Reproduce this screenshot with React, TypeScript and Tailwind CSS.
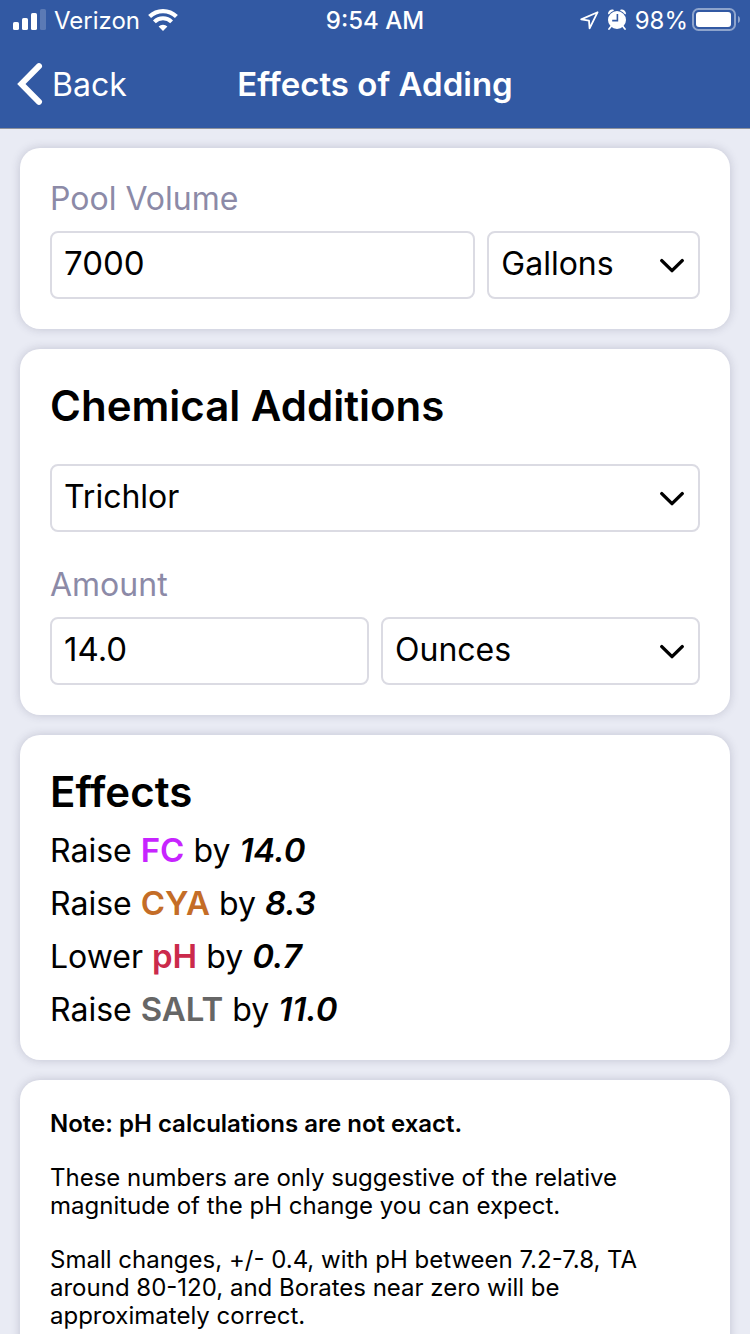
import { useState } from 'react'
import type { ReactNode, SelectHTMLAttributes } from 'react'

const chemicals = ['Trichlor', 'Dichlor', 'Bleach', 'Borax']

const effects = [
  { verb: 'Raise', name: 'FC', color: 'text-[#c724ff]', value: '14.0' },
  { verb: 'Raise', name: 'CYA', color: 'text-[#c46d27]', value: '8.3' },
  { verb: 'Lower', name: 'pH', color: 'text-[#cb2a4b]', value: '0.7' },
  { verb: 'Raise', name: 'SALT', color: 'text-[#666666]', value: '11.0' },
]

function Card({ children }: { children: ReactNode }) {
  return (
    <section className="rounded-[20px] bg-white p-[30px] shadow-[0_0_10px_rgba(60,60,90,0.22)]">
      {children}
    </section>
  )
}

function Select({ children, ...props }: SelectHTMLAttributes<HTMLSelectElement>) {
  return (
    <div className="relative">
      <select
        {...props}
        className="block h-[68px] w-full appearance-none rounded-lg border-2 border-[#dbdbe3] bg-white pr-14 pb-0.5 pl-3 text-[32px] text-black"
      >
        {children}
      </select>
      {/* Chevron over the right end of the select */}
      <svg
        className="pointer-events-none absolute top-[27px] right-4 h-4 w-6"
        viewBox="0 0 24 16"
        fill="none"
        stroke="black"
        strokeWidth="3.4"
        strokeLinecap="round"
        strokeLinejoin="round"
        aria-hidden="true"
      >
        <path d="M1.8 2.6 12 12.6 22.2 2.6" />
      </svg>
    </div>
  )
}

function StatusBar() {
  return (
    <div className="grid h-10 grid-cols-3 items-center px-3 text-[24px] leading-7">
      <div className="flex items-center gap-2">
        <svg className="h-[22px] w-[34px]" viewBox="0 0 34 22" fill="white" aria-hidden="true">
          <rect x="1" y="13" width="6" height="8" rx="1.6" />
          <rect x="10" y="9" width="6" height="12" rx="1.6" />
          <rect x="19" y="4" width="6" height="17" rx="1.6" />
          <rect x="28" y="0" width="6" height="21" rx="1.6" opacity="0.2" />
        </svg>
        <span className="pt-0.5">Verizon</span>
        <svg className="h-[22px] w-[30px]" viewBox="0 0 30 22" fill="none" stroke="white" aria-hidden="true">
          <path d="M1.6 7.6a19.2 19.2 0 0 1 26.8 0" strokeWidth="4.2" />
          <path d="M6.4 12.9a12.2 12.2 0 0 1 17.2 0" strokeWidth="4" />
          <path d="M10.6 17.6a6.4 6.4 0 0 1 8.8 0L15 22Z" fill="white" stroke="none" />
        </svg>
      </div>
      <div className="pt-0.5 text-center font-medium">9:54 AM</div>
      <div className="flex items-center justify-end">
        <svg className="mr-2 h-5 w-5" viewBox="0 0 20 20" fill="none" stroke="white" strokeWidth="1.8" strokeLinejoin="round" aria-hidden="true">
          <path d="M18.6 2.2 2.2 9.4l7.8 1.2.6 7.8Z" />
        </svg>
        <svg className="mr-2 h-[22px] w-5" viewBox="0 0 20 22" aria-hidden="true">
          <circle cx="10" cy="11" r="9" fill="white" />
          <path d="M1 4.8A4.2 4.2 0 0 1 6.2.6L7 1.4A10.5 10.5 0 0 0 1.8 5.6ZM19 4.8A4.2 4.2 0 0 0 13.8.6L13 1.4a10.5 10.5 0 0 1 5.2 4.2Z" fill="white" />
          <path d="M3.8 17.8 2 20M16.2 17.8 18 20" stroke="white" strokeWidth="1.8" strokeLinecap="round" />
          <path d="M10.4 5v6.6H5.2" fill="none" stroke="#3259a3" strokeWidth="1.6" />
        </svg>
        <span className="mr-1 pt-0.5">98%</span>
        <svg className="-mr-0.5 h-6 w-12" viewBox="0 0 48 24" fill="none" aria-hidden="true">
          <rect x="1" y="1" width="42" height="21" rx="5.5" stroke="white" strokeOpacity="0.45" strokeWidth="2" />
          <rect x="4" y="4" width="35" height="15" rx="3" fill="white" />
          <path d="M46 8c1.4.6 2 1.8 2 3.5s-.6 2.9-2 3.5Z" fill="white" fillOpacity="0.45" />
        </svg>
      </div>
    </div>
  )
}

export default function App() {
  const [volume, setVolume] = useState('7000')
  const [volumeUnit, setVolumeUnit] = useState('Gallons')
  const [chemical, setChemical] = useState('Trichlor')
  const [amount, setAmount] = useState('14.0')
  const [amountUnit, setAmountUnit] = useState('Ounces')

  const inputClass =
    'block h-[68px] w-full rounded-lg border-2 border-[#dbdbe3] bg-white px-3 pb-1 text-[33px] text-black'

  return (
    <div className="min-h-screen bg-[#e9ebf4] font-['Inter','Liberation_Sans',sans-serif] text-black">
      <header className="border-b border-[#8e929c] bg-[#3259a3] text-white">
        <StatusBar />
        <div className="grid h-[88px] grid-cols-[1fr_auto_1fr] items-center px-4">
          <button type="button" className="flex items-center gap-2 justify-self-start text-[32px]">
            <svg className="h-[42px] w-7" viewBox="0 0 28 42" fill="none" stroke="white" strokeWidth="6" strokeLinecap="round" aria-hidden="true">
              <path d="M23 3.2 5.4 21 23 38.8" />
            </svg>
            <span className="pt-0.5">Back</span>
          </button>
          <h1 className="pt-0.5 text-[33px] font-semibold">Effects of Adding</h1>
        </div>
      </header>

      <main className="flex flex-col gap-5 px-5 py-[19px]">
        <Card>
          <label htmlFor="volume" className="mb-3 block text-[32px] leading-[41px] text-[#8c8aa7]">
            Pool Volume
          </label>
          <div className="grid grid-cols-[2fr_1fr] gap-3">
            <input
              id="volume"
              type="text"
              inputMode="decimal"
              className={inputClass}
              value={volume}
              onChange={(e) => setVolume(e.target.value)}
            />
            <Select aria-label="Volume unit" value={volumeUnit} onChange={(e) => setVolumeUnit(e.target.value)}>
              <option>Gallons</option>
              <option>Liters</option>
            </Select>
          </div>
        </Card>

        <Card>
          <h2 className="mb-8 text-[42px] leading-[53px] font-semibold">Chemical Additions</h2>
          <Select aria-label="Chemical" value={chemical} onChange={(e) => setChemical(e.target.value)}>
            {chemicals.map((name) => (
              <option key={name}>{name}</option>
            ))}
          </Select>
          <label htmlFor="amount" className="mt-8 mb-3 block text-[32px] leading-[41px] text-[#8c8aa7]">
            Amount
          </label>
          <div className="grid grid-cols-2 gap-3">
            <input
              id="amount"
              type="text"
              inputMode="decimal"
              className={inputClass}
              value={amount}
              onChange={(e) => setAmount(e.target.value)}
            />
            <Select aria-label="Amount unit" value={amountUnit} onChange={(e) => setAmountUnit(e.target.value)}>
              <option>Ounces</option>
              <option>Pounds</option>
              <option>Grams</option>
            </Select>
          </div>
        </Card>

        <Card>
          <h2 className="text-[42px] leading-[53px] font-semibold">Effects</h2>
          <ul>
            {effects.map((effect) => (
              <li key={effect.name} className="mt-3 text-[32px] leading-[41px]">
                {effect.verb} <span className={`text-[33px] font-semibold ${effect.color}`}>{effect.name}</span> by{' '}
                <em className="text-[33px] font-semibold italic">{effect.value}</em>
              </li>
            ))}
          </ul>
        </Card>

        <Card>
          <div className="space-y-[26px] text-[24px] leading-7">
            <p className="font-semibold">Note: pH calculations are not exact.</p>
            <p>These numbers are only suggestive of the relative magnitude of the pH change you can expect.</p>
            <p>
              Small changes, +/- 0.4, with pH between 7.2-7.8, TA around 80-120, and Borates near zero will be
              approximately correct.
            </p>
          </div>
        </Card>
      </main>
    </div>
  )
}
